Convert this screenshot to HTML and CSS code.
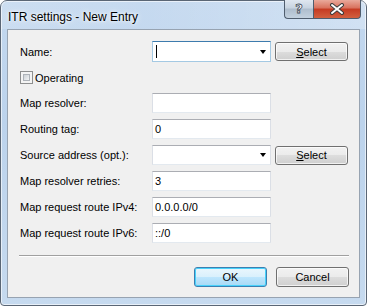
FILE: index.html
```html
<!DOCTYPE html>
<html lang="en">
<head>
    <meta charset="UTF-8">
    <title>ITR settings - New Entry</title>
    <link rel="stylesheet" href="styles.css">
</head>
<body>

    <div class="window">
        <div class="titlebar">
            <span class="title">ITR settings - New Entry</span>
            <div class="caption-buttons">
                <div class="cap-btn help"><span>?</span></div>
                <div class="cap-btn close">
                    <svg width="16" height="12" viewBox="0 0 16 12">
                        <path d="M3 2 L13 10 M13 2 L3 10" stroke="#3b3b3b" stroke-width="4" stroke-linecap="round"/>
                        <path d="M3 2 L13 10 M13 2 L3 10" stroke="#fff" stroke-width="2" stroke-linecap="round"/>
                    </svg>
                </div>
            </div>
        </div>

        <div class="client">
            <div class="form">
                <div class="row row-top">
                    <label>Name:</label>
                    <div class="field combo focused">
                        <span class="caret"></span>
                        <span class="arrow"></span>
                    </div>
                    <div class="btn select"><u>S</u>elect</div>
                </div>

                <div class="row row-check">
                    <span class="checkbox"><span class="checkbox-inner"></span></span>
                    <label>Operating</label>
                </div>

                <div class="row">
                    <label>Map resolver:</label>
                    <div class="field"></div>
                </div>
                <div class="row">
                    <label>Routing tag:</label>
                    <div class="field">0</div>
                </div>
                <div class="row">
                    <label>Source address (opt.):</label>
                    <div class="field combo"><span class="arrow"></span></div>
                    <div class="btn select"><u>S</u>elect</div>
                </div>
                <div class="row">
                    <label>Map resolver retries:</label>
                    <div class="field">3</div>
                </div>
                <div class="row">
                    <label>Map request route IPv4:</label>
                    <div class="field">0.0.0.0/0</div>
                </div>
                <div class="row">
                    <label>Map request route IPv6:</label>
                    <div class="field">::/0</div>
                </div>
            </div>

            <div class="separator"></div>

            <div class="actions">
                <div class="btn default">OK</div>
                <div class="btn">Cancel</div>
            </div>
        </div>
    </div>

</body>
</html>
```

FILE: styles.css
```css
body {
    margin: 0;
    background: #ffffff;
    font-family: "Liberation Sans", Arial, sans-serif;
}
.window {
    width: 367px;
    height: 306px;
    box-sizing: border-box;
    border: 1px solid #5a6675;
    border-radius: 7px 7px 4px 4px;
    background: linear-gradient(to bottom, #c3d8ef, #bcd3ec 40%, #c6daef);
    padding: 0 6px 7px 6px;
    box-shadow: inset 0 0 0 1px rgba(255, 255, 255, 0.6);
}
.titlebar {
    height: 28px;
    display: flex;
    justify-content: space-between;
    align-items: flex-start;
    background: linear-gradient(to right, rgba(255,255,255,0.15), rgba(255,255,255,0.05) 40%, rgba(255,255,255,0.25));
    margin: 0 -6px;
    padding: 0 5px 0 7px;
}
.title {
    font-size: 12px;
    color: #000;
    margin-top: 9px;
    text-shadow: 0 0 6px #ffffff, 0 0 3px #ffffff;
}
.caption-buttons {
    display: flex;
    margin-top: -1px;
}
.cap-btn {
    height: 19px;
    box-sizing: border-box;
    border: 1px solid #4f5d6e;
    border-top: none;
    display: flex;
    align-items: center;
    justify-content: center;
}
.help {
    width: 29px;
    border-right: none;
    border-radius: 0 0 0 4px;
    background: linear-gradient(to bottom, #dfe7f0, #c7d3e0 45%, #aebdcd 50%, #c3d1df);
}
.help span {
    font-family: "DejaVu Sans", sans-serif;
    font-weight: bold;
    font-size: 13px;
    color: #fff;
    -webkit-text-stroke: 0.8px #3f4a56;
    margin-top: -1px;
}
.close {
    width: 48px;
    border-radius: 0 0 4px 0;
    background: linear-gradient(to bottom, #e9a99b, #d8705c 45%, #c53a22 50%, #d2603f);
}
.client {
    height: 269px;
    box-sizing: border-box;
    border: 1px solid #97a3b1;
    background: #f0f0f0;
    font-size: 11px;
    color: #000;
    display: flex;
    flex-direction: column;
}
.form {
    padding: 11px 0 0 12px;
}
.row {
    display: flex;
    align-items: center;
    height: 20px;
    margin-bottom: 6px;
}
.row label {
    width: 132px;
}
.row-top {
    height: 21px;
    margin-bottom: 9px;
}
.row-check {
    height: 13px;
    margin-bottom: 9px;
}
.row-check label {
    margin-left: 2px;
}
.checkbox {
    width: 13px;
    height: 13px;
    box-sizing: border-box;
    border: 1px solid #8e8f8f;
    background: #f4f4f4;
    padding: 2px;
    display: flex;
}
.checkbox-inner {
    flex: 1;
    border: 1px solid #aeb3b9;
    background: linear-gradient(135deg, #cdd1d6, #f3f4f5);
}
.field {
    width: 119px;
    height: 20px;
    box-sizing: border-box;
    border: 1px solid #dbdfe6;
    border-top-color: #abadb3;
    border-bottom-color: #e3e9ef;
    background: #fff;
    padding-left: 2px;
    line-height: 18px;
    display: flex;
    align-items: center;
}
.row-top .field {
    height: 21px;
}
.combo {
    position: relative;
}
.focused {
    border-color: #a4c9e3;
    border-top-color: #3d7bad;
}
.caret {
    width: 1px;
    height: 13px;
    background: #000;
    margin-left: 1px;
}
.arrow {
    position: absolute;
    right: 4px;
    top: 50%;
    margin-top: -2px;
    border-left: 3.5px solid transparent;
    border-right: 3.5px solid transparent;
    border-top: 4px solid #000;
}
.btn {
    width: 73px;
    height: 20px;
    box-sizing: border-box;
    border: 1px solid #707070;
    border-radius: 3px;
    background: linear-gradient(to bottom, #f2f2f2, #ebebeb 50%, #dddddd 50%, #cfcfcf);
    box-shadow: inset 0 0 0 1px rgba(255, 255, 255, 0.7);
    display: flex;
    align-items: center;
    justify-content: center;
}
.select {
    height: 19px;
    margin-left: 4px;
}
.separator {
    margin: 6px 10px 0 11px;
    height: 1px;
    background: #a0a0a0;
    border-bottom: 1px solid #ffffff;
}
.actions {
    display: flex;
    justify-content: flex-end;
    gap: 9px;
    margin: 10px 10px 0 0;
}
.default {
    border-color: #3c7fb1;
    background: linear-gradient(to bottom, #eaf6fd, #d9f0fc 50%, #bee6fd 50%, #a7d9f5);
    box-shadow: inset 0 0 0 1px #48d2fb;
}
```
